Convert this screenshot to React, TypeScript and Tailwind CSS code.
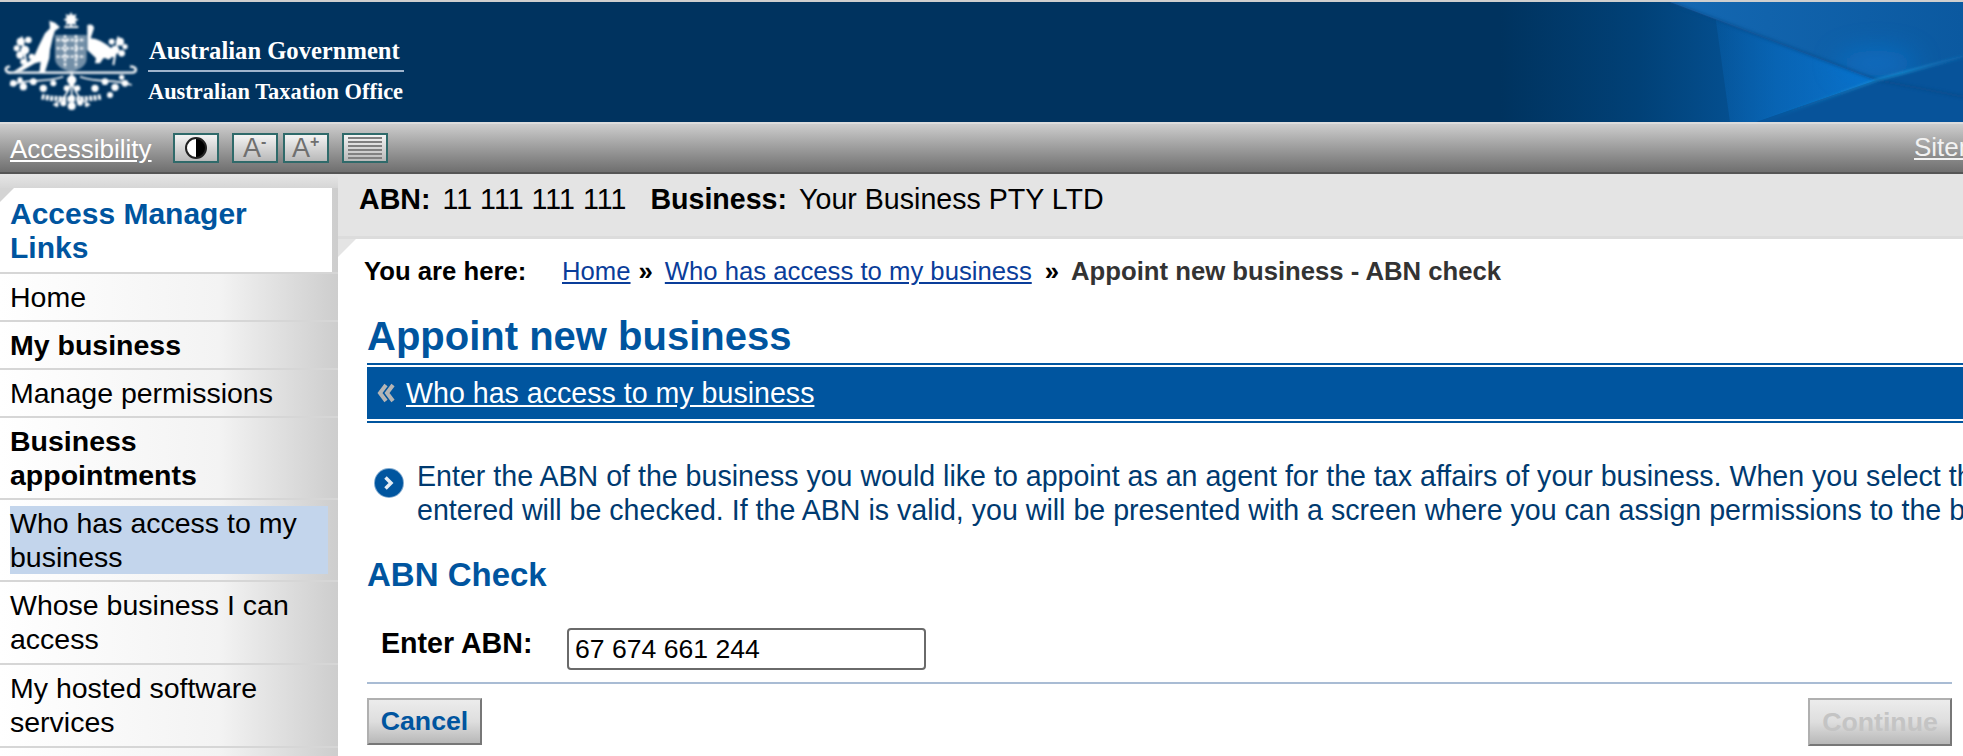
const sans = { fontFamily: '"Liberation Sans", Arial, sans-serif' }

const sideItems = [
  { label: 'Home', h: 'h-[45px]' },
  { label: 'My business', bold: true, h: 'h-[45px]' },
  { label: 'Manage permissions', h: 'h-[45px]' },
  { label: 'Business appointments', bold: true, h: 'h-[79px]' },
  { label: 'Who has access to my business', active: true, h: 'h-[79px]' },
  { label: 'Whose business I can access', h: 'h-[80px]' },
  { label: 'My hosted software services', h: 'h-[80px]' },
]

// wattle blossoms on the crest
const blossoms = [
  [62, 125, 12], [75, 150, 13], [60, 165, 11], [85, 120, 10], [50, 145, 9], [95, 170, 9], [70, 185, 9],
  [360, 125, 12], [345, 150, 13], [365, 160, 10], [335, 125, 9], [375, 140, 8], [325, 170, 8],
  [40, 250, 10], [70, 260, 11], [100, 245, 10], [130, 265, 11], [160, 250, 9], [60, 240, 8],
  [375, 250, 10], [345, 262, 11], [315, 245, 10], [285, 265, 11], [330, 285, 9], [365, 232, 8],
  [215, 240, 14], [200, 265, 9], [232, 265, 9], [190, 310, 9], [215, 318, 12], [240, 308, 9], [215, 295, 10],
  [170, 315, 6], [260, 315, 6],
]

function Crest() {
  return (
    <svg width="150" height="120" viewBox="0 6 450 360" className="shrink-0" fill="#fff">
      <defs>
        <filter id="soft">
          <feGaussianBlur stdDeviation="2.5" />
        </filter>
      </defs>
      <g filter="url(#soft)">
        <path d="M213 36l5 10 11-3-3 11 10 5-10 5 3 11-11-3-5 8-5-8-11 3 3-11-10-5 10-5-3-11 11 3z" />
        <rect x="193" y="78" width="42" height="6" />
        {/* kangaroo */}
        <path d="M148 62L165 68L180 82L165 92L158 115L150 150L148 175L135 215L118 218L122 185L105 190L65 213L40 215L100 175L115 140L135 100L150 85Z" />
        {/* emu */}
        <path d="M262 75Q280 70 282 85L272 115Q300 115 340 150L345 170L310 175L300 190L285 190L288 175L262 150L262 110L262 85Z" />
        {/* shield */}
        <path d="M165 105h95v70q0 30-47 40q-47-10-48-40z" opacity=".45" />
        <g fill="none" stroke="#fff">
          <path d="M170 120h85M170 145h85M170 170h85M195 105v100M228 105v100" strokeWidth="7" strokeDasharray="9 5" />
          <path d="M30 200C10 200 15 220 35 218L395 218C415 218 410 198 390 200" strokeWidth="7" />
          <path d="M125 290C170 300 260 300 305 290" strokeWidth="16" strokeDasharray="9 4" />
          <path d="M215 215V320M30 255C80 235 130 250 190 230M395 255C345 235 295 250 240 230M160 315C190 300 205 280 215 240M270 315C240 300 225 280 215 240" strokeWidth="5" />
          <path d="M65 110L80 195M355 110L340 195" strokeWidth="6" />
        </g>
        {blossoms.map(([x, y, r], i) => (
          <circle key={i} cx={x} cy={y} r={r} />
        ))}
      </g>
    </svg>
  )
}

function HeaderSwoosh() {
  return (
    <svg className="absolute right-0 top-0" width="463" height="120" viewBox="0 6 1389 360">
      <defs>
        <linearGradient id="base" x1="0" x2="1" y1="0" y2="0">
          <stop offset="0" stopColor="#00335f" />
          <stop offset="0.3" stopColor="#014177" />
          <stop offset="0.6" stopColor="#06569c" />
          <stop offset="1" stopColor="#0a5aa2" />
        </linearGradient>
        <linearGradient id="lower" x1="0" x2="1" y1="0" y2="0">
          <stop offset="0" stopColor="#0a70c8" stopOpacity="0" />
          <stop offset="1" stopColor="#0a72cc" />
        </linearGradient>
        <linearGradient id="upper" x1="0" x2="1" y1="0" y2="0">
          <stop offset="0" stopColor="#1468b2" />
          <stop offset="1" stopColor="#0b59a0" />
        </linearGradient>
        <linearGradient id="line" x1="0" x2="1" y1="0" y2="0">
          <stop offset="0" stopColor="#1a8fd0" stopOpacity="0" />
          <stop offset="0.7" stopColor="#1a93d4" />
          <stop offset="1" stopColor="#1a7cc0" stopOpacity="0.4" />
        </linearGradient>
        <filter id="b3" x="-20%" y="-50%" width="140%" height="200%">
          <feGaussianBlur stdDeviation="4" />
        </filter>
        <filter id="b30" x="-100%" y="-200%" width="300%" height="500%">
          <feGaussianBlur stdDeviation="40" />
        </filter>
      </defs>
      <rect x="0" y="6" width="1389" height="360" fill="url(#base)" />
      <path d="M510 6L1130 240L770 366H690L640 6z" fill="url(#lower)" />
      <path d="M510 6H1389V170L1130 240z" fill="url(#upper)" />
      <ellipse cx="1130" cy="190" rx="120" ry="40" fill="#1175cf" opacity=".7" filter="url(#b30)" />
      <path d="M770 366L1130 240L1389 170V366z" fill="#07539a" />
      <path d="M510 6L1130 240L1389 290" fill="none" stroke="#084886" strokeWidth="8" opacity=".6" filter="url(#b3)" />
      <path d="M780 366L1130 240L1389 170" fill="none" stroke="url(#line)" strokeWidth="6" filter="url(#b3)" />
    </svg>
  )
}

function ToolButton({ children, className = '' }: { children: React.ReactNode; className?: string }) {
  return (
    <div
      className={
        'w-[46px] h-[30px] border-2 border-[#2f6a6a] bg-gradient-to-b from-[#f4f4f4] to-[#b9b9b9] flex items-center justify-center overflow-hidden ' +
        className
      }
    >
      {children}
    </div>
  )
}

export default function App() {
  return (
    <div className="w-[1963px] h-[756px] overflow-hidden bg-white flex flex-col" style={sans}>
      <div className="h-[2px] bg-[#cfcfcf] shrink-0" />
      <header className="h-[120px] shrink-0 relative overflow-hidden bg-[#00335f] flex items-start">
        <HeaderSwoosh />
        <Crest />
        <div className="relative -ml-[2px] mt-[35px] w-[256px]" style={{ fontFamily: '"Liberation Serif", serif' }}>
          <div className="text-white font-bold text-[24.6px] leading-[28px] whitespace-nowrap pl-[1px]">Australian Government</div>
          <div className="h-[2px] bg-[#9fb4cc] mt-[5px] mb-[6px]" />
          <div className="text-white font-bold text-[22.4px] leading-[28px] whitespace-nowrap">Australian Taxation Office</div>
        </div>
      </header>
      <div className="h-[2px] bg-[#dcdcdc] shrink-0" />
      <nav className="h-[50px] shrink-0 bg-gradient-to-b from-[#cdcdcd] to-[#6f6f6f] border-b-[2px] border-[#555] flex items-center pl-[10px]">
        <a className="text-white underline text-[26px] leading-[34px] mt-[1px]">Accessibility</a>
        <ToolButton className="ml-[21px]">
          <span className="w-[22px] h-[22px] rounded-full border-2 border-[#222] bg-gradient-to-r from-white from-50% to-black to-50%" />
        </ToolButton>
        <ToolButton className="ml-[13px]">
          <span className="text-[#6f6f6f] text-[27px] leading-[28px]">A</span>
          <span className="text-[#6f6f6f] text-[16px] leading-[16px] font-bold mb-[12px]">-</span>
        </ToolButton>
        <ToolButton className="ml-[5px]">
          <span className="text-[#6f6f6f] text-[27px] leading-[28px]">A</span>
          <span className="text-[#6f6f6f] text-[16px] leading-[16px] font-bold mb-[12px]">+</span>
        </ToolButton>
        <ToolButton className="ml-[13px] flex-col gap-[2px]">
          {[0, 1, 2, 3, 4, 5].map((i) => (
            <span key={i} className="block w-[34px] h-[2px] bg-[#808080]" />
          ))}
        </ToolButton>
        <a className="ml-auto w-[49px] text-[#f2f2f2] underline text-[26px] leading-[34px] whitespace-nowrap mb-[3px]">Sitemap</a>
      </nav>

      <div className="flex flex-1 min-h-0">
        <aside className="w-[338px] shrink-0 bg-gradient-to-r from-white via-[#f3f3f3] via-65% to-[#cdcdcd] text-[28.5px] leading-[34px] text-black">
          <div className="h-[14px] bg-gradient-to-b from-[#e6e6e6] to-[#d6d6d6]" />
          <div className="bg-[#d4d4d4] mr-[6px]">
            <div className="bg-white h-[84px] px-[10px] pt-[9px] text-[#00559f] text-[30px] leading-[34px] font-bold [clip-path:polygon(14px_0,100%_0,100%_100%,0_100%,0_14px)]">
              Access Manager Links
            </div>
          </div>
          {sideItems.map((item) => (
            <div
              key={item.label}
              className={'border-t-[2px] border-[#d6d6d6] px-[10px] pb-[1px] flex items-center box-content ' + item.h + (item.bold ? ' font-bold' : '')}
            >
              <div className={item.active ? 'bg-[#c3d5ec] w-[318px] -mr-[8px]' : ''}>{item.label}</div>
            </div>
          ))}
          <div className="border-t-[2px] border-[#d6d6d6] h-[10px]" />
        </aside>

        <main className="flex-1 min-w-0 bg-[#e4e4e4]">
          <div className="h-[62px] pl-[21px] pt-[8px] text-[28.6px] leading-[34px] text-black flex whitespace-nowrap">
            <b>ABN:</b>
            <span className="ml-[12px]">11 111 111 111</span>
            <b className="ml-[24px]">Business:</b>
            <span className="ml-[12px]">Your Business PTY LTD</span>
          </div>
          <div className="h-[3px] bg-[#dcdcdc]" />
          <div className="bg-white h-[520px] pl-[29px] [clip-path:polygon(18px_0,100%_0,100%_100%,0_100%,0_18px)]">
            <div className="h-[64px] -ml-[3px] flex items-center text-[25.7px] leading-[32px] whitespace-nowrap font-bold text-[#333]">
              <span className="text-black w-[198px]">You are here:</span>
              <a className="font-normal text-[#0a3d9a] underline">Home</a>
              <span className="ml-[8px] text-black">»</span>
              <a className="ml-[12px] font-normal text-[#0a3d9a] underline">Who has access to my business</a>
              <span className="ml-[13px] text-black">»</span>
              <span className="ml-[12px]">Appoint new business - ABN check</span>
            </div>
            <h1 className="text-[40px] leading-[46px] font-bold text-[#00559f] mt-[10px] whitespace-nowrap">Appoint new business</h1>
            <div className="mt-[4px] border-t-[2px] border-[#00559f] pt-[2px] pb-[2px] border-b-[2px]">
              <div className="h-[52px] bg-[#00559f] flex items-center pl-[10px] text-white text-[28.6px] leading-[34px]">
                <svg width="18" height="20" viewBox="0 0 18 20" className="shrink-0" fill="none" stroke="#b5b5b5" strokeWidth="4">
                  <path d="M9 2L3 10l6 8M16 2L10 10l6 8" />
                </svg>
                <a className="ml-[11px] underline whitespace-nowrap">Who has access to my business</a>
              </div>
            </div>
            <div className="mt-[36px] flex pl-[7px] text-[#003a70] text-[28.6px] leading-[34px] whitespace-nowrap">
              <svg width="30" height="30" viewBox="0 0 30 30" className="shrink-0 mt-[9px]">
                <circle cx="15" cy="15" r="15" fill="#7fa9cf" />
                <circle cx="15" cy="15" r="14" fill="#00559f" />
                <path d="M11.5 9.5l5.5 5.5-5.5 5.5" fill="none" stroke="#e4edf5" strokeWidth="3.5" />
              </svg>
              <div className="ml-[13px]">
                <div>Enter the ABN of the business you would like to appoint as an agent for the tax affairs of your business. When you select the Continue button the ABN</div>
                <div>entered will be checked. If the ABN is valid, you will be presented with a screen where you can assign permissions to the business.</div>
              </div>
            </div>
            <h2 className="mt-[28px] text-[33px] leading-[40px] font-bold text-[#00559f]">ABN Check</h2>
            <div className="mt-[33px] flex items-start pl-[14px]">
              <label className="w-[186px] -mt-[2px] text-[28.6px] leading-[34px] font-bold text-black">Enter ABN:</label>
              <input
                readOnly
                value="67 674 661 244"
                className="w-[359px] h-[42px] border-2 border-[#6a6a6a] rounded-[4px] px-[6px] text-[26.6px] text-black bg-white outline-none"
                style={sans}
              />
            </div>
            <div className="mt-[12px] mr-[11px] h-[2px] bg-[#a9bcd4]" />
            <div className="mt-[14px] mr-[11px] flex justify-between items-start">
              <button className="w-[115px] h-[47px] border-2 border-[#b0b0b0] border-r-[#777] border-b-[#777] bg-gradient-to-b from-[#ececec] via-[#dedede] to-[#b8b8b8] text-[#00559f] text-[26.7px] font-bold" style={sans}>
                Cancel
              </button>
              <button className="w-[144px] h-[48px] border-2 border-[#b0b0b0] border-r-[#777] border-b-[#777] bg-gradient-to-b from-[#ececec] via-[#dedede] to-[#b8b8b8] text-[#c4c4c4] text-[26.7px] font-bold" style={sans}>
                Continue
              </button>
            </div>
          </div>
        </main>
      </div>
    </div>
  )
}
